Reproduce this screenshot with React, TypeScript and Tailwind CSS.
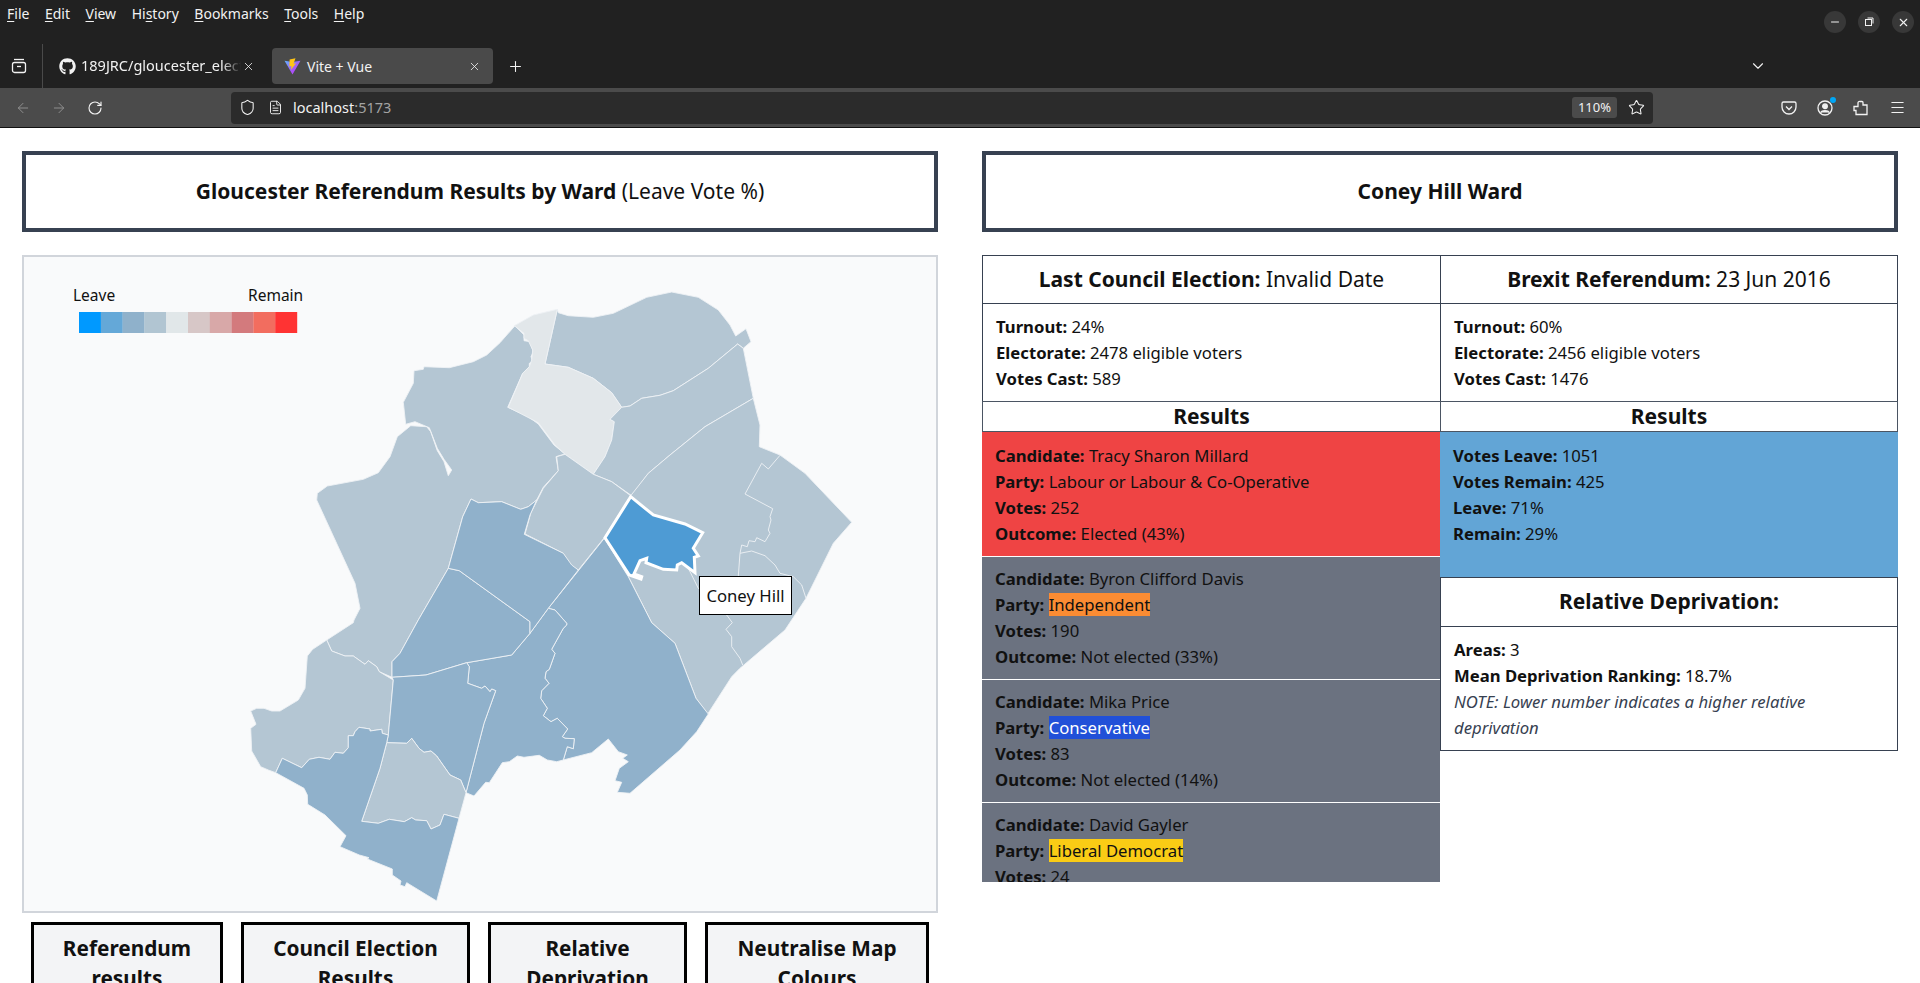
import { ArrowLeft, ArrowRight, ChevronDown, FileText, Menu, Minus, Plus, RotateCw, Shield, Star, X } from "lucide-react"
import { FaGithub } from "react-icons/fa"

const LIGHT = "#b4c6d3"
const MID = "#90b1cb"
const PALE = "#e2e7ea"

// ward outlines, in page pixels
const wards: { fill: string; points: string }[] = [
  { fill: LIGHT, points: "515,325.7 524,335 524,340.7 530,341.7 533.3,351.7 531,356.7 532.7,361.7 529.3,363.3 529.3,366.7 522.7,373.3 507.7,407.3 527.3,416 538.3,424 554,445 565,454 556,456.7 558.3,470.7 543.3,487.3 536.7,500 528.3,506.7 520.7,509.3 501.7,501.7 478.3,502.7 471,499 462.7,516.7 448.3,568.3 418.3,620 400,653.3 392,661.7 392,677.3 379.3,671.7 376.7,666.7 368.3,660.7 365,664.3 353.3,656 345,656 331.7,651 326.7,640 353.3,622.7 354,620 360,608.3 355,583.3 316.7,500 317.3,493.3 327.3,486 363.3,479.3 378.3,472.7 390,456.7 397.3,436.7 410.7,425.7 426.7,426.7 430.7,431.7 437.3,450.7 444,461.7 448.3,475.7 451.7,470 444,459.3 437.3,448.3 429.3,427.7 415,421.7 405.7,424.3 403.3,402.3 413.3,383.3 414,370.7 423.3,369.3 424,366.7 449.3,367.7 473.3,361.7 486.7,355 500,342.7" },
  { fill: LIGHT, points: "557.3,309.3 558.3,312.7 568.3,315.7 593.3,317.3 613.3,313.3 646.7,297.3 671.7,292 698.3,297.3 718.3,310 730,325 735.7,336 746,328.7 751,341.7 743.3,348.3 737.7,344 708.3,368.3 673.3,390.7 660,395.3 641.7,398.3 630,406 621.7,407.3 611.7,392.7 593.3,378.3 568.3,367.3 545,364" },
  { fill: PALE, points: "514.3,325.7 533.3,315 557.3,309.3 545,364 568.3,367.3 593.3,378.3 611.7,392.7 621.7,407.3 610,419.3 614.3,421.7 611.7,440 605,456.7 593.3,474.3 565,454.3 555,445 538.3,422.7 508.3,407.3 522.7,373.3 529.3,366.7 531.7,360 532.7,350 528.3,340.7 524,338.3 524,333.3" },
  { fill: LIGHT, points: "737.7,344 743.3,348.3 753.3,398.3 705,426.7 670,455 648.3,473.3 631.7,495.7 611.7,481.7 593.3,474.3 605,456.7 611.7,440 614.3,421.7 610,419.3 621.7,407.3 630,406 641.7,398.3 660,395.3 673.3,390.7 708.3,368.3" },
  { fill: LIGHT, points: "565,454.3 593.3,474.3 611.7,481.7 630.7,495.7 604.3,537.7 578.3,570 570,565 563.3,553.3 525,534 530.7,513.3 543.3,488.3 558.3,470.7 556.7,456.7" },
  { fill: LIGHT, points: "753.3,398.3 760,425 759.3,446.7 780,455 805,473.3 851.7,522.3 833.3,543.3 806,598.3 785,630 742.7,666 740,668.3 731.7,676.7 707.7,714 696,698.3 675,643.3 651.7,622.7 628.3,576.7 604.3,537.7 630.7,495.7 648.3,473.3 670,455 705,426.7" },
  { fill: MID, points: "604.3,538.3 628.3,576.7 651.7,622.7 675,643.3 696,698.3 708.3,714 696.7,731.7 680,750 630,793.3 617.3,792.3 621.7,782.3 615,780.7 619.3,768.3 628.3,761.7 622.7,758.3 627.3,755 618.3,751.7 608.3,739 591.7,752.7 563.3,760 567.3,746.7 573.3,748.7 574.3,738.7 565,738.3 562.3,736.7 567.7,729 557.3,718.3 551,721.7 543.3,715.7 547.3,708.3 540.7,698.3 541.7,690.7 549,683.3 545,678.3 546,671.7 549.3,669.3 555,653.3 551.7,649.3 563.3,628.3 566.7,625 566.7,623.3 555,610 548.3,608.3" },
  { fill: MID, points: "548.3,608.3 555,610 566.7,623.3 566.7,625 563.3,628.3 551.7,649.3 555,653.3 549.3,669.3 546,671.7 545,678.3 549,683.3 541.7,690.7 540.7,698.3 547.3,708.3 543.3,715.7 551,721.7 557.3,718.3 567.7,729 562.3,736.7 565,738.3 574.3,738.7 573.3,748.7 567.3,746.7 563.3,760 556.7,761.7 547.3,760 539.3,755.3 524,757.3 517.3,756 509.3,761.7 502.3,762.7 489.3,782.7 485.7,782.3 474,796 466,792.7 484,723.3 495.7,690.7 491.7,689 490,691.7 485,686 481.7,688.3 467.7,683.3 469.3,666.7 466.7,662.7 511.7,655 530,633.3" },
  { fill: MID, points: "448.3,568.3 459.3,570.7 530,621.7 530,633.3 511.7,655 466.7,662.7 426,675 392,677.3 392,661.7 400,653.3 418.3,620" },
  { fill: MID, points: "471,499 478.3,502.7 501.7,501.7 520.7,509.3 528.3,506.7 536.7,500 530,515 524.3,534.3 563.3,553.3 571.7,565 578.3,570 548.3,608.3 530,633.3 530,621.7 459.3,570.7 448.3,568.3 462.7,516.7" },
  { fill: LIGHT, points: "326.7,640 331.7,651 345,656 353.3,656 365,664.3 368.3,660.7 376.7,666.7 379.3,671.7 393.3,680 388.3,735 382.3,733.3 381.7,729.3 370,731 370,729 359,727.3 355,731.7 353.3,735.7 348.3,735.7 348.3,747.7 343.3,753.3 335,752.3 330,759.3 319,757.3 309.3,759.3 301.7,767.7 282.3,758.3 275.7,772.7 268.3,770 260.7,766.7 251.7,751 250.7,728.3 256,724.3 250.7,711 256.7,708.3 264,708.3 271.7,711 280,711 298.3,700 305,688.3 307.3,656 312.7,649.3" },
  { fill: MID, points: "393.3,680 392,677.3 426,675 466.7,662.7 469.3,666.7 467.7,683.3 481.7,688.3 485,686 490,691.7 491.7,689 495.7,690.7 484,723.3 466,792.7 460.7,780 450,775 436.7,756 431,751 424,752.3 419,748.3 411.7,738.3 406.7,743.3 386.7,742.7 388.3,735" },
  { fill: LIGHT, points: "386.7,742.7 406.7,743.3 411.7,738.3 419,748.3 424,752.3 431,751 436.7,756 450,775 460.7,780 466,792.7 459,818.3 444,814.3 440,825 431,829 426.7,820.7 415.7,820 411.7,817.7 404.3,821.7 389.3,819.3 378.3,823.3 361.7,821.3 380,768.3" },
  { fill: MID, points: "275.7,772.7 282.3,758.3 301.7,767.7 309.3,759.3 319,757.3 330,759.3 335,752.3 343.3,753.3 348.3,747.7 348.3,735.7 353.3,735.7 355,731.7 359,727.3 370,729 370,731 381.7,729.3 382.3,733.3 388.3,735 386.7,742.7 380,768.3 361.7,821.3 378.3,823.3 389.3,819.3 404.3,821.7 411.7,817.7 415.7,820 426.7,820.7 431,829 440,825 444,814.3 459,818.3 436.7,901 406.7,882.7 405,886.7 400,885 401,881 392.3,875 392.3,869 367.3,859 369,857.7 359.3,855 340,846.7 346,835.7 325,815 307.7,804.3 307.3,795 304,788.3" },
]

// boundaries inside the eastern block
const innerLines = [
  "780,455.3 768.3,469 761.7,463.3 745,494 772.7,508.7 770,516.7 771,520 768.3,530 770,533.3 765,541.7 756.7,537.7 755,541.7 749,540.7 747.3,546.7 741.7,545 740,553.3 738.3,576 735,600",
  "740,553.3 751.7,551 765,555.7 775,565 780,573.3 793.3,576.7 801.7,585 806,598.3",
  "688.3,568.3 698.3,588.3 726.7,615 732.3,622.7 726,629.3 731.7,636.7 731.7,646.7 740,658.3 742.7,665",
]

const coneyHill = "630.7,496.7 653.3,515 685,524 702.7,532.7 693.3,548.3 698.3,556 694.3,557.3 695,572.7 681.7,562.7 677.3,565 676.7,570 663.3,569.3 646,562.7 646.7,558.3 640,560.7 634,574 641.7,576.7 641,579 629.3,575 605,537.7"

const legend = ["#0099ff", "#64a8d8", "#8fb1cb", "#b1c5d2", "#e1e7e9", "#d7c7c7", "#d8a8a8", "#d37a7d", "#f26d5f", "#ff3333"]

const candidates = [
  { name: "Tracy Sharon Millard", party: "Labour or Labour & Co-Operative", partyClass: "", votes: 252, outcome: "Elected (43%)", box: "h-[125px] bg-[#ef4444] pt-[11px]" },
  { name: "Byron Clifford Davis", party: "Independent", partyClass: "bg-[#fb8c33]", votes: 190, outcome: "Not elected (33%)", box: "h-[123px] bg-[#6b7280] pt-[9px]" },
  { name: "Mika Price", party: "Conservative", partyClass: "bg-[#2150d8] text-white", votes: 83, outcome: "Not elected (14%)", box: "h-[123px] bg-[#6b7280] pt-[9px]" },
  { name: "David Gayler", party: "Liberal Democrat", partyClass: "bg-[#facc15]", votes: 24, outcome: "Not elected (6%)", box: "h-[123px] bg-[#6b7280] pt-[9px]" },
]

const buttons = [
  { label: "Referendum results", w: "w-[192px]" },
  { label: "Council Election Results", w: "w-[229px]" },
  { label: "Relative Deprivation", w: "w-[199px]" },
  { label: "Neutralise Map Colours", w: "w-[224px]" },
]

function Row({ label, value }: { label: string; value: string | number }) {
  return (
    <p>
      <b className="font-bold">{label}:</b> {value}
    </p>
  )
}

function Mnemonic({ before = "", u, after }: { before?: string; u: string; after: string }) {
  return (
    <span>
      {before}
      <span className="underline underline-offset-2">{u}</span>
      {after}
    </span>
  )
}

function ViteLogo() {
  return (
    <svg width="17" height="17" viewBox="0 0 16 16">
      <defs>
        <linearGradient id="vite" x1="0" y1="0" x2="1" y2="1">
          <stop offset="0" stopColor="#5fb4ff" />
          <stop offset="0.6" stopColor="#a855f7" />
          <stop offset="1" stopColor="#bd34fe" />
        </linearGradient>
      </defs>
      <path d="M0.5 2.5 L8 15.5 L15.5 2.5 L8 3.8 Z" fill="url(#vite)" />
      <path d="M10.8 0.3 L5.3 1.4 L5 8 L7 7.5 L6.6 11 L11.3 5 L9 5.3 Z" fill="#ffc517" />
    </svg>
  )
}

function BrowserChrome() {
  return (
    <div className="bg-[#212121] text-[#f2f2f2]">
      <div className="flex h-[44px] items-start justify-between pr-[6px]">
        <div className="flex gap-[15.5px] pl-[7px] pt-[4px] text-[14px] leading-5">
          <Mnemonic u="F" after="ile" />
          <Mnemonic u="E" after="dit" />
          <Mnemonic u="V" after="iew" />
          <Mnemonic before="Hi" u="s" after="tory" />
          <Mnemonic u="B" after="ookmarks" />
          <Mnemonic u="T" after="ools" />
          <Mnemonic u="H" after="elp" />
        </div>
        <div className="flex gap-[12px] pt-[11px]">
          <span className="flex h-[22px] w-[22px] items-center justify-center rounded-full bg-[#383838]"><Minus size={12} /></span>
          <span className="flex h-[22px] w-[22px] items-center justify-center rounded-full bg-[#383838]">
            <svg width="10" height="10" viewBox="0 0 10 10" fill="none" stroke="currentColor"><rect x="1.5" y="2.5" width="6" height="6" /><path d="M3.5 1 H9 V6.5" /></svg>
          </span>
          <span className="flex h-[22px] w-[22px] items-center justify-center rounded-full bg-[#383838]"><X size={13} /></span>
        </div>
      </div>

      <div className="flex h-[44px] items-center text-[14px]">
        <div className="flex h-full w-[43px] items-center justify-center border-r border-[#4a4a4a] pr-[4px]">
          <svg width="16" height="16" viewBox="0 0 16 16" fill="none" stroke="currentColor" strokeWidth="1.3"><path d="M3 1.5 H13" /><rect x="1.5" y="4.5" width="13" height="10" rx="2" /><path d="M6 8.5 H10" /></svg>
        </div>
        <div className="flex w-[229px] items-center pl-[16px]">
          <FaGithub size={17} className="shrink-0" />
          <span className="ml-[5px] w-[160px] overflow-hidden whitespace-nowrap text-[14.5px] [mask-image:linear-gradient(to_right,black_88%,transparent)]">189JRC/gloucester_elections</span>
          <X size={13} strokeWidth={1.5} className="ml-[1px] shrink-0" />
        </div>
        <div className="flex h-[36px] w-[221px] items-center rounded-[4px] bg-[#4a4a4a] pl-[12px] pr-[12px]">
          <ViteLogo />
          <span className="ml-[6px] flex-1">Vite + Vue</span>
          <X size={13} strokeWidth={1.5} />
        </div>
        <Plus size={17} strokeWidth={1.5} className="ml-[14px]" />
        <ChevronDown size={18} strokeWidth={1.5} className="ml-[1225px]" />
      </div>

      <div className="flex h-[40px] items-center border-b border-[#111] bg-[#4b4b4b] pr-[14px]">
        <div className="flex w-[231px] items-center gap-[20px] pl-[15px]">
          <ArrowLeft size={16} strokeWidth={1.5} className="text-[#8e8e8e]" />
          <ArrowRight size={16} strokeWidth={1.5} className="text-[#8e8e8e]" />
          <RotateCw size={16} strokeWidth={1.7} />
        </div>
        <div className="flex h-[32px] w-[1422px] items-center rounded-[4px] bg-[#2b2b2b] pl-[8px] pr-[8px] text-[14.5px]">
          <Shield size={17} strokeWidth={1.5} />
          <FileText size={15} strokeWidth={1.5} className="ml-[12px]" />
          <span className="ml-[10px] flex-1">localhost<span className="text-[#a3a3a3]">:5173</span></span>
          <span className="flex h-[21px] w-[45px] items-center justify-center rounded-[3px] bg-[#4b4b4b] text-[13px]">110%</span>
          <Star size={17} strokeWidth={1.5} className="ml-[11px]" />
        </div>
        <div className="ml-auto flex items-center gap-[20px]">
          <svg width="16" height="16" viewBox="0 0 16 16" fill="none" stroke="currentColor" strokeWidth="1.3"><path d="M2.5 2 H13.5 A1.5 1.5 0 0 1 15 3.5 V7 A7 7 0 0 1 1 7 V3.5 A1.5 1.5 0 0 1 2.5 2 Z" /><path d="M5 6.5 L8 9.5 L11 6.5" /></svg>
          <span className="relative">
            <svg width="16" height="16" viewBox="0 0 16 16" fill="none" stroke="currentColor" strokeWidth="1.3"><circle cx="8" cy="8" r="7" /><circle cx="8" cy="6.2" r="2.3" fill="currentColor" /><path d="M3.5 12.5 C5 10 11 10 12.5 12.5" fill="currentColor" /></svg>
            <span className="absolute right-[-3px] top-[-3px] h-[6px] w-[6px] rounded-full bg-[#00a6f5]" />
          </span>
          <svg width="16" height="16" viewBox="0 0 16 16" fill="none" stroke="currentColor" strokeWidth="1.3"><path d="M7 1.5 H9 A1 1 0 0 1 10 2.5 V5 H14 V14.5 H3 V10.5 H1 V6.5 H5 V3 A1.5 1.5 0 0 1 7 1.5 Z" /></svg>
          <Menu size={17} strokeWidth={1.5} />
        </div>
      </div>
    </div>
  )
}

function WardMap() {
  return (
    <div className="relative h-[658px] border-2 border-[#d1d5db] bg-[#f9fafb]">
      <svg className="block h-full w-full" viewBox="24 257 912 654">
        <text x="73" y="301" fontSize="15.5" fontFamily="'Noto Sans', sans-serif" fill="#111">Leave</text>
        <text x="248" y="301" fontSize="15.5" fontFamily="'Noto Sans', sans-serif" fill="#111">Remain</text>
        {legend.map((c, i) => (
          <rect key={c} x={79 + i * 21.8} y="312" width="22" height="21" fill={c} />
        ))}
        {wards.map((w) => (
          <polygon key={w.points} points={w.points} fill={w.fill} stroke="#eef2f5" strokeWidth="0.9" strokeLinejoin="round" />
        ))}
        {innerLines.map((l) => (
          <polyline key={l} points={l} fill="none" stroke="#eef2f5" strokeWidth="0.9" />
        ))}
        <polygon points={coneyHill} fill="#4e9bd4" stroke="#fff" strokeWidth="3" />
      </svg>
      <div className="absolute left-[675px] top-[319px] flex h-[39px] w-[93px] items-center justify-center border border-black bg-white text-[16.7px] text-[#111]">
        Coney Hill
      </div>
    </div>
  )
}

export default function App() {
  return (
    <div className="h-[983px] overflow-hidden bg-white font-['Noto_Sans',sans-serif] text-[#111]">
      <BrowserChrome />
      <main className="flex gap-[44px] px-[22px] pt-[23px]">
        <section className="w-[916px]">
          <h1 className="mb-[23px] flex h-[81px] items-center justify-center border-4 border-[#374151] bg-white pt-[1px] text-[21px]">
            <span><b className="font-bold">Gloucester Referendum Results by Ward</b> (Leave Vote %)</span>
          </h1>
          <WardMap />
          <div className="mt-[9px] flex gap-[18px] px-[9px]">
            {buttons.map((b) => (
              <button key={b.label} className={`${b.w} h-[80px] border-[3px] border-black bg-[#f3f4f6] px-3 py-[8px] text-center text-[20.8px] font-bold leading-[30px] text-[#111]`}>
                {b.label}
              </button>
            ))}
          </div>
        </section>

        <section className="w-[916px]">
          <h1 className="mb-[23px] flex h-[81px] items-center justify-center border-4 border-[#374151] bg-white pt-[1px] text-[21px] font-bold">
            Coney Hill Ward
          </h1>
          <div className="flex text-[16.7px] leading-[26px]">
            <div className="w-[458px] shrink-0">
              <h2 className="flex h-[49px] items-center justify-center border border-r-0 border-[#374151] pb-[1px] text-[21px]">
                <span><b className="font-bold">Last Council Election:</b> Invalid Date</span>
              </h2>
              <div className="h-[97px] border-l border-[#374151] px-[13px] pt-[10px]">
                <Row label="Turnout" value="24%" />
                <Row label="Electorate" value="2478 eligible voters" />
                <Row label="Votes Cast" value="589" />
              </div>
              <h3 className="flex h-[31px] items-center justify-center border border-r-0 border-[#4b5563] pb-[1px] text-[21px] font-bold">Results</h3>
              <div className="h-[450px] overflow-hidden">
                {candidates.map((c) => (
                  <div key={c.name} className={`${c.box} border-b border-white pl-[13px]`}>
                    <Row label="Candidate" value={c.name} />
                    <p>
                      <b className="font-bold">Party:</b> <span className={c.partyClass}>{c.party}</span>
                    </p>
                    <Row label="Votes" value={c.votes} />
                    <Row label="Outcome" value={c.outcome} />
                  </div>
                ))}
              </div>
            </div>

            <div className="w-[458px] shrink-0">
              <h2 className="flex h-[49px] items-center justify-center border border-[#374151] pb-[1px] text-[21px]">
                <span><b className="font-bold">Brexit Referendum:</b> 23 Jun 2016</span>
              </h2>
              <div className="h-[97px] border-x border-[#374151] px-[13px] pt-[10px]">
                <Row label="Turnout" value="60%" />
                <Row label="Electorate" value="2456 eligible voters" />
                <Row label="Votes Cast" value="1476" />
              </div>
              <h3 className="flex h-[31px] items-center justify-center border border-[#4b5563] pb-[1px] text-[21px] font-bold">Results</h3>
              <div className="h-[145px] bg-[#62a5d6] pl-[13px] pt-[11px]">
                <Row label="Votes Leave" value="1051" />
                <Row label="Votes Remain" value="425" />
                <Row label="Leave" value="71%" />
                <Row label="Remain" value="29%" />
              </div>
              <h2 className="flex h-[50px] items-center justify-center border border-[#374151] pb-[2px] text-[21px] font-bold">Relative Deprivation:</h2>
              <div className="h-[124px] border-x border-b border-[#374151] px-[13px] pt-[10px]">
                <Row label="Areas" value="3" />
                <Row label="Mean Deprivation Ranking" value="18.7%" />
                <p className="italic text-[#374151]">NOTE: Lower number indicates a higher relative deprivation</p>
              </div>
            </div>
          </div>
        </section>
      </main>
    </div>
  )
}
